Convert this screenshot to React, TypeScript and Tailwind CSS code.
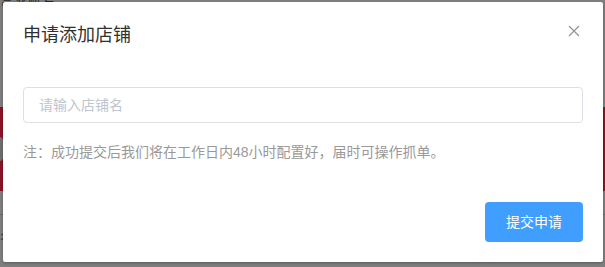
import { useState } from 'react'

export default function App() {
  const [shopName, setShopName] = useState('')

  return (
    <div
      className="relative h-[267px] w-[605px] overflow-hidden bg-[#7f7f7f]"
      style={{ fontFamily: '"Liberation Sans", "Noto Sans CJK SC", sans-serif' }}
    >
      {/* dimmed page behind the dialog */}
      <div className="flex h-full flex-col">
        <div className="-mt-[9px] h-[16px] text-[14px] leading-4 text-[#2a2a2a]">营业账号</div>
        <div className="mt-[100px] flex h-[84px] items-center bg-[#8a1427]">
          <div className="-ml-[10px] h-[26px] w-[14px] rounded-full bg-[#6f6f6f]" />
        </div>
        <div className="mt-[23px] h-px bg-[#6a6a6a]" />
        <div className="mt-[12px] text-[14px] leading-5 text-[#333]">名称</div>
      </div>

      {/* dialog */}
      <div className="absolute left-[3px] top-[2px] flex w-[600px] flex-col rounded-[2px] bg-white shadow-[0_1px_3px_rgba(0,0,0,0.3)]">
        <div className="relative px-5 pb-[9px] pt-[21px]">
          <span className="text-[18px] leading-6 text-[#303133]">申请添加店铺</span>
          <button className="absolute right-[21px] top-[21px] flex h-4 w-4 items-center justify-center text-[#909399]">
            <svg width="12" height="12" viewBox="0 0 12 12" fill="none" stroke="currentColor" strokeWidth="1.2">
              <path d="M1 1L11 11M11 1L1 11" />
            </svg>
          </button>
        </div>

        <div className="px-5 pt-[30px]">
          <input
            value={shopName}
            onChange={e => setShopName(e.target.value)}
            placeholder="请输入店铺名"
            className="h-9 w-full rounded border border-[#dcdfe6] px-[15px] text-[14px] text-[#606266] outline-none placeholder:text-[#c0c4cc]"
          />
          <p className="mt-[19px] text-[14px] leading-5 text-[#999]">
            注：成功提交后我们将在工作日内48小时配置好，届时可操作抓单。
          </p>
        </div>

        <div className="flex justify-end px-5 pb-5 pt-10">
          <button className="h-10 w-[98px] rounded bg-[#409eff] text-[14px] text-white">提交申请</button>
        </div>
      </div>
    </div>
  )
}
